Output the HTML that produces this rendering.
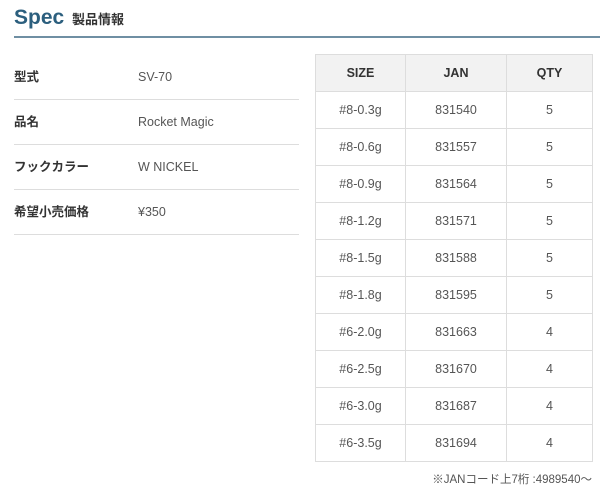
<!DOCTYPE html><html><head><meta charset="utf-8"><style>
body{margin:0;width:600px;height:492px;background:#fff;font-family:"Liberation Sans","Noto Sans CJK JP",sans-serif;color:#555;position:relative;overflow:hidden}
.h{position:absolute;left:14px;top:6px;font-size:21px;line-height:24px;font-weight:bold;color:#2c5f7e}
.h small{font-size:13px;color:#333;margin-left:2px}
.line{position:absolute;left:14px;right:0;top:36px;height:2px;background:#6f8fa3}
.row{position:absolute;left:14px;width:285px;height:45px;border-bottom:1px solid #ddd;font-size:12.5px;line-height:16px}
.row b{position:absolute;left:0;top:15px;color:#333}
.row span{position:absolute;left:124px;top:15px}
table{position:absolute;left:315px;top:54px;width:278px;border-collapse:collapse;font-size:12.5px}
td,th{border:1px solid #ddd;text-align:center;height:36px;padding:0}
th{background:#f2f2f2;color:#333;font-weight:bold}
td:nth-child(1),th:nth-child(1){width:89px}
td:nth-child(2),th:nth-child(2){width:100px}
.f{position:absolute;right:8px;top:471px;font-size:11.5px}
</style></head><body>
<div class="h">Spec <small>製品情報</small></div>
<div class="line"></div>
<div class="row" style="top:54px"><b>型式</b><span>SV-70</span></div>
<div class="row" style="top:99px"><b>品名</b><span>Rocket Magic</span></div>
<div class="row" style="top:144px"><b>フックカラー</b><span>W NICKEL</span></div>
<div class="row" style="top:189px"><b>希望小売価格</b><span>¥350</span></div>
<table>
<tr><th>SIZE</th><th>JAN</th><th>QTY</th></tr>
<tr><td>#8-0.3g</td><td>831540</td><td>5</td></tr>
<tr><td>#8-0.6g</td><td>831557</td><td>5</td></tr>
<tr><td>#8-0.9g</td><td>831564</td><td>5</td></tr>
<tr><td>#8-1.2g</td><td>831571</td><td>5</td></tr>
<tr><td>#8-1.5g</td><td>831588</td><td>5</td></tr>
<tr><td>#8-1.8g</td><td>831595</td><td>5</td></tr>
<tr><td>#6-2.0g</td><td>831663</td><td>4</td></tr>
<tr><td>#6-2.5g</td><td>831670</td><td>4</td></tr>
<tr><td>#6-3.0g</td><td>831687</td><td>4</td></tr>
<tr><td>#6-3.5g</td><td>831694</td><td>4</td></tr>
</table>
<div class="f">※JANコード上7桁 :4989540～</div>
</body></html>
